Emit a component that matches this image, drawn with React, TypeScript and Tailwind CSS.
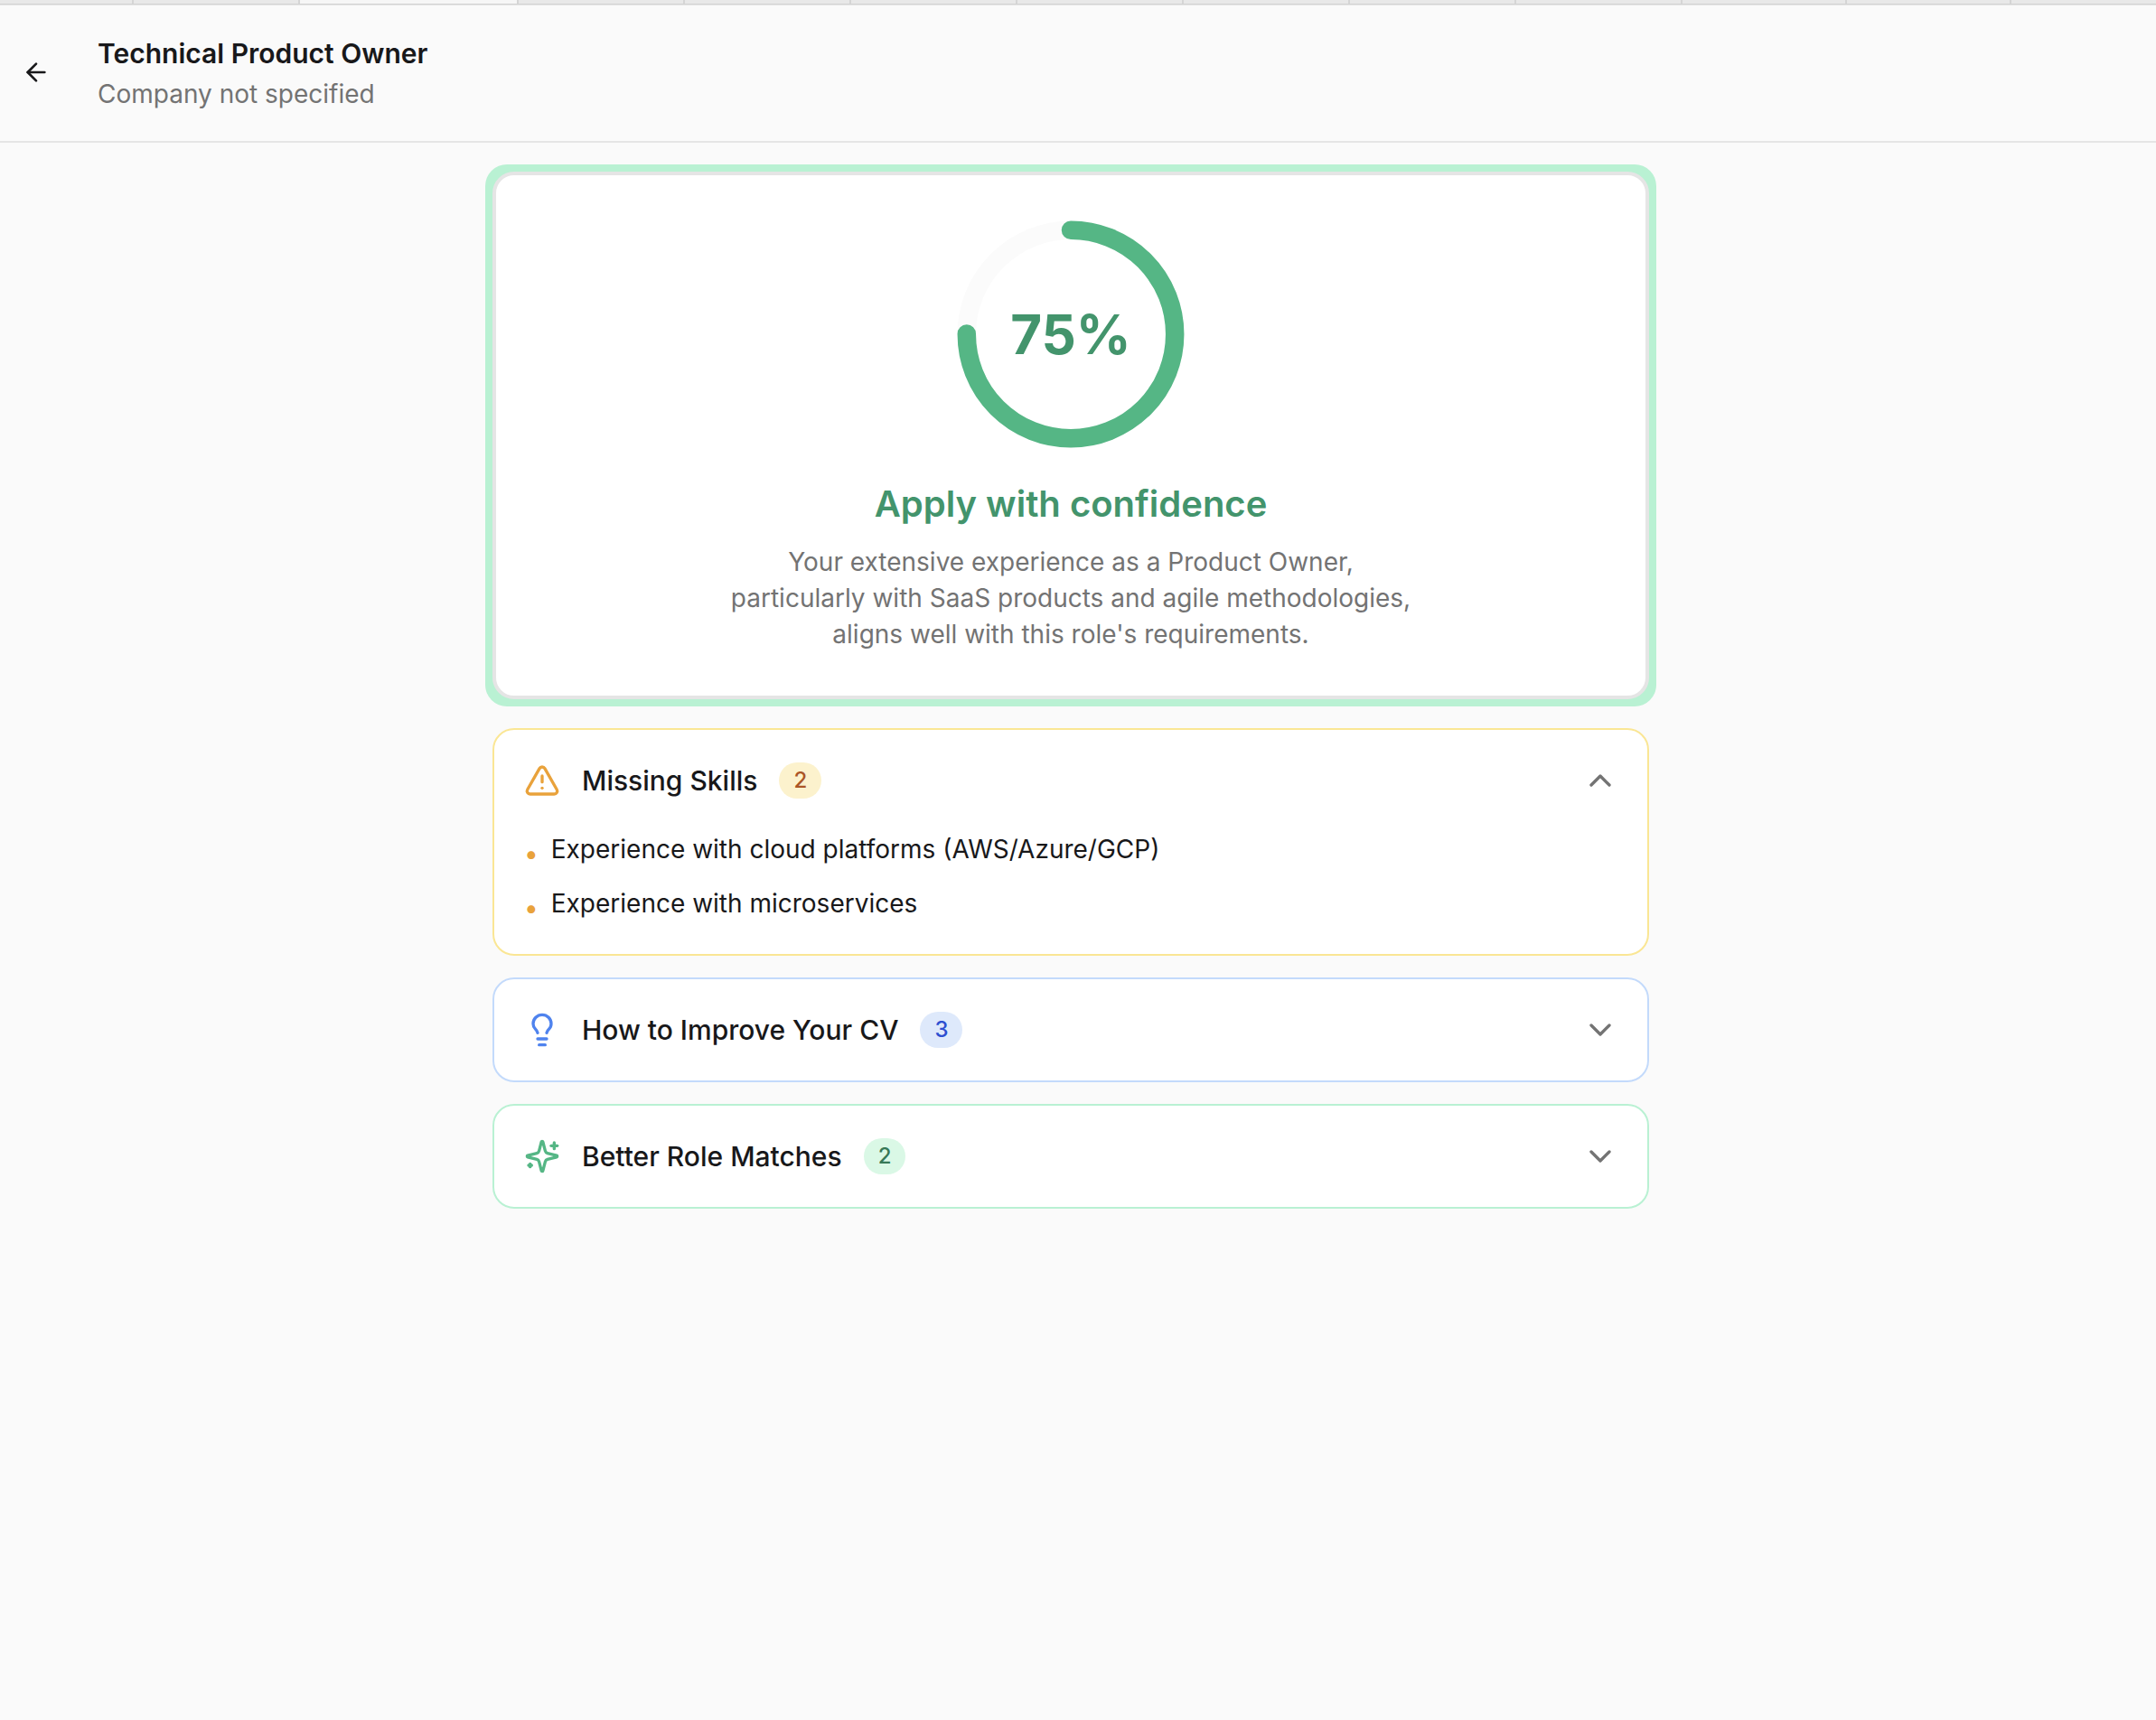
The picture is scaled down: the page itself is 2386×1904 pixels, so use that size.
import { useState, type ReactNode } from "react";
import { ArrowLeft, ChevronDown, ChevronUp, Lightbulb, TriangleAlert } from "lucide-react";

const SCORE = 75;

function TabStrip() {
  const tab = "h-full flex-none border-r-2 border-[#d5d5d5]";
  return (
    <div aria-hidden="true" className="h-1.5 border-b border-[#e4e4e4]">
      <div className="flex h-[5px] overflow-hidden border-b border-[#d2d2d2] bg-[#e8e8e8]">
        <div className={`${tab} w-[148px]`} />
        <div className={`${tab} w-[184px]`} />
        <div className={`${tab} w-[242px] bg-[#f6f6f6]`} />
        {Array.from({ length: 7 }, (_, i) => (
          <div key={i} className={`${tab} w-[184px]`} />
        ))}
        <div className={`${tab} w-[182px]`} />
        <div className={`${tab} w-[182px]`} />
      </div>
    </div>
  );
}

function SparklesIcon({ className }: { className?: string }) {
  return (
    <svg
      viewBox="0 0 24 24"
      className={className}
      fill="none"
      stroke="currentColor"
      strokeWidth="2"
      strokeLinecap="round"
      strokeLinejoin="round"
      aria-hidden="true"
    >
      <path d="M9.937 15.5A2 2 0 0 0 8.5 14.063l-6.135-1.582a.5.5 0 0 1 0-.962L8.5 9.936A2 2 0 0 0 9.937 8.5l1.582-6.135a.5.5 0 0 1 .963 0L14.063 8.5A2 2 0 0 0 15.5 9.937l6.135 1.581a.5.5 0 0 1 0 .964L15.5 14.063a2 2 0 0 0-1.437 1.437l-1.582 6.135a.5.5 0 0 1-.963 0z" />
      <path d="M20 3v4" />
      <path d="M22 5h-4" />
      <path d="M4 17v2" />
      <path d="M5 18H3" />
    </svg>
  );
}

function ScoreRing({ value }: { value: number }) {
  const length = 2 * Math.PI * 45;
  return (
    <div className="grid size-64 place-items-center">
      <svg viewBox="0 0 100 100" className="col-start-1 row-start-1 size-64 -rotate-90" fill="none" strokeWidth="8">
        <circle cx="50" cy="50" r="45" stroke="#fbfbfb" />
        <circle
          cx="50"
          cy="50"
          r="45"
          stroke="#55b685"
          strokeLinecap="round"
          strokeDasharray={`${(length * value) / 100} ${length}`}
        />
      </svg>
      <span className="col-start-1 row-start-1 text-[60px] leading-[60px] font-bold text-[#43946c]">{value}%</span>
    </div>
  );
}

type SectionProps = {
  id: string;
  title: string;
  count: number;
  icon: ReactNode;
  border: string;
  badge: string;
  items: string[];
  initiallyOpen?: boolean;
};

function Section({ id, title, count, icon, border, badge, items, initiallyOpen = false }: SectionProps) {
  const [open, setOpen] = useState(initiallyOpen);
  const Chevron = open ? ChevronUp : ChevronDown;
  return (
    <section className={`rounded-3xl border-2 bg-white ${border}`}>
      <h2>
        <button
          type="button"
          aria-expanded={open}
          aria-controls={id}
          onClick={() => setOpen(!open)}
          className="flex w-full items-center gap-6 py-9 pr-8 pl-[33px] text-left"
        >
          {icon}
          <span className="text-[30px] leading-10 font-medium">{title}</span>
          <span className={`rounded-full px-4 text-2xl leading-10 font-medium ${badge}`}>{count}</span>
          <Chevron className="ml-auto size-10 text-[#737373]" />
        </button>
      </h2>
      {open && (
        <ul id={id} className="flex flex-col gap-5 px-[33px] pb-9">
          {items.map((item) => (
            <li key={item} className="flex items-start gap-3.5 text-[28px] leading-10">
              <span aria-hidden="true" className="mt-2.5 text-[28px] leading-[30px] text-[#e9a23b]">
                •
              </span>
              {item}
            </li>
          ))}
        </ul>
      )}
    </section>
  );
}

export default function App() {
  return (
    <div className="min-h-screen bg-[#fafafa] font-['Inter',sans-serif] text-[#18181a]">
      <TabStrip />
      <header className="flex items-start gap-11 border-b-2 border-[#e5e5e5] px-4 py-8">
        <button type="button" aria-label="Back" className="grid h-21 w-12 place-items-center">
          <ArrowLeft className="size-8" />
        </button>
        <div className="flex flex-col gap-1">
          <h1 className="text-[30px] leading-[42px] font-semibold">Technical Product Owner</h1>
          <p className="text-[28px] leading-10 text-[#737373]">Company not specified</p>
        </div>
      </header>
      <main className="py-6 pr-4">
        <div className="mx-auto flex max-w-[1296px] flex-col gap-6">
          <div className="rounded-3xl bg-[#b9f1d3] p-2">
            <section className="flex flex-col items-center rounded-3xl border-4 border-[#e5e5e5] bg-white p-12 text-center">
              <ScoreRing value={SCORE} />
              <h2 className="mt-8 text-[40px] leading-[56px] font-semibold text-[#43946c]">Apply with confidence</h2>
              <p className="mt-4 max-w-[768px] text-[28px] leading-10 text-[#737373]">
                Your extensive experience as a Product Owner, particularly with SaaS products and agile methodologies,
                aligns well with this role's requirements.
              </p>
            </section>
          </div>
          <div className="flex flex-col gap-6 px-2">
            <Section
              id="missing-skills"
              title="Missing Skills"
              count={2}
              icon={<TriangleAlert className="size-10 text-[#e9a23b]" />}
              border="border-[#fae694]"
              badge="bg-[#fcf2cd] text-[#ab5626]"
              items={["Experience with cloud platforms (AWS/Azure/GCP)", "Experience with microservices"]}
              initiallyOpen
            />
            <Section
              id="improve-cv"
              title="How to Improve Your CV"
              count={3}
              icon={<Lightbulb className="size-10 text-[#4f83ee]" />}
              border="border-[#c3dafb]"
              badge="bg-[#dee9fb] text-[#2d4fd0]"
              items={[]}
            />
            <Section
              id="role-matches"
              title="Better Role Matches"
              count={2}
              icon={<SparklesIcon className="size-10 text-[#55b685]" />}
              border="border-[#b9f1d3]"
              badge="bg-[#daf8e6] text-[#377857]"
              items={[]}
            />
          </div>
        </div>
      </main>
    </div>
  );
}
